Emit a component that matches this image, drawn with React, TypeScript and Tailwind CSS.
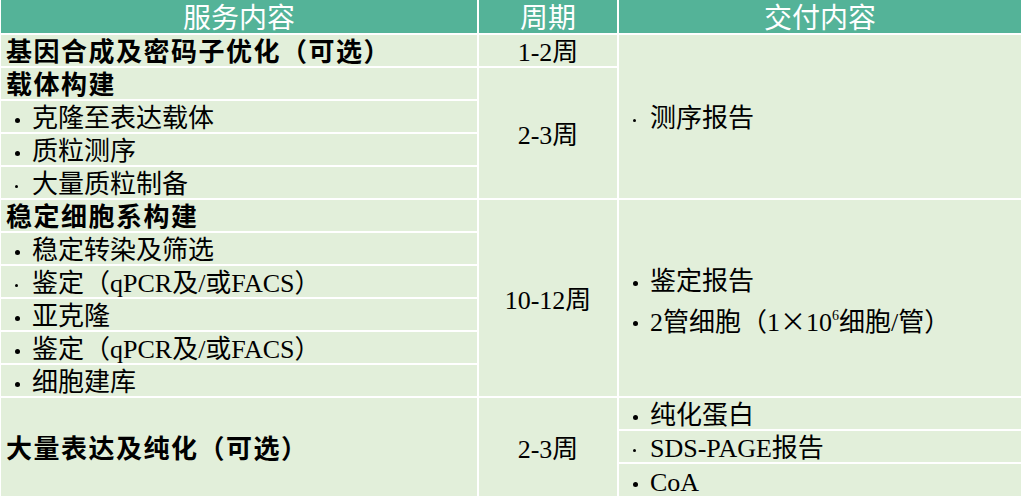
type Dot = "big" | "small";

function Bullet({ dot, children }: { dot: Dot; children: React.ReactNode }) {
  return (
    <div className="flex items-center pl-[14px]">
      <span className="flex w-[17px] items-center pt-[3px]">
        <span
          className={
            dot === "big"
              ? "block h-[5px] w-[5px] rounded-full bg-black"
              : "block h-[3px] w-[3px] rounded-full bg-black"
          }
        />
      </span>
      <span>{children}</span>
    </div>
  );
}

const cell = "bg-[#e2efda] flex items-center pt-[5px]";
const heading = "pl-[5px] font-bold tracking-[1.5px]";

export default function App() {
  return (
    <div className="h-[496px] w-[1021px] overflow-hidden bg-white pl-px font-['Liberation_Serif','Noto_Sans_CJK_SC',serif] text-[26px] leading-none text-black">
      <div className="grid grid-cols-[476px_138px_402px] grid-rows-[33px_repeat(13,31px)_32px] gap-[2px]">
        {/* header */}
        <div className="col-start-1 row-start-1 flex items-center justify-center bg-[#54b398] pt-[4px] text-[28px] text-white">
          服务内容
        </div>
        <div className="col-start-2 row-start-1 flex items-center justify-center bg-[#54b398] pt-[4px] text-[28px] text-white">
          周期
        </div>
        <div className="col-start-3 row-start-1 flex items-center justify-center bg-[#54b398] pt-[4px] text-[28px] text-white">
          交付内容
        </div>

        {/* service column */}
        <div className={`${cell} ${heading} col-start-1 row-start-2`}>基因合成及密码子优化（可选）</div>
        <div className={`${cell} ${heading} col-start-1 row-start-3`}>载体构建</div>
        <div className={`${cell} col-start-1 row-start-4`}>
          <Bullet dot="big">克隆至表达载体</Bullet>
        </div>
        <div className={`${cell} col-start-1 row-start-5`}>
          <Bullet dot="big">质粒测序</Bullet>
        </div>
        <div className={`${cell} col-start-1 row-start-6`}>
          <Bullet dot="small">大量质粒制备</Bullet>
        </div>
        <div className={`${cell} ${heading} col-start-1 row-start-7`}>稳定细胞系构建</div>
        <div className={`${cell} col-start-1 row-start-8`}>
          <Bullet dot="big">稳定转染及筛选</Bullet>
        </div>
        <div className={`${cell} col-start-1 row-start-9`}>
          <Bullet dot="small">鉴定（qPCR及/或FACS）</Bullet>
        </div>
        <div className={`${cell} col-start-1 row-start-10`}>
          <Bullet dot="big">亚克隆</Bullet>
        </div>
        <div className={`${cell} col-start-1 row-start-11`}>
          <Bullet dot="big">鉴定（qPCR及/或FACS）</Bullet>
        </div>
        <div className={`${cell} col-start-1 row-start-12`}>
          <Bullet dot="big">细胞建库</Bullet>
        </div>
        <div className={`${cell} ${heading} col-start-1 row-start-13 row-span-3`}>大量表达及纯化（可选）</div>

        {/* period column */}
        <div className={`${cell} col-start-2 row-start-2 justify-center`}>1-2周</div>
        <div className={`${cell} col-start-2 row-start-3 row-span-4 justify-center`}>2-3周</div>
        <div className={`${cell} col-start-2 row-start-7 row-span-6 justify-center`}>10-12周</div>
        <div className={`${cell} col-start-2 row-start-13 row-span-3 justify-center`}>2-3周</div>

        {/* deliverables column */}
        <div className={`${cell} col-start-3 row-start-2 row-span-5`}>
          <Bullet dot="small">测序报告</Bullet>
        </div>
        <div className="col-start-3 row-start-7 row-span-6 flex flex-col justify-center gap-[12px] bg-[#e2efda] pt-[9px]">
          <Bullet dot="big">鉴定报告</Bullet>
          <Bullet dot="big">
            2管细胞（1<span className="font-['Noto_Sans_CJK_SC']">×</span>10
            <sup className="relative top-[-11px] text-[14px]">6</sup>细胞/管）
          </Bullet>
        </div>
        <div className={`${cell} col-start-3 row-start-13`}>
          <Bullet dot="big">纯化蛋白</Bullet>
        </div>
        <div className={`${cell} col-start-3 row-start-14`}>
          <Bullet dot="small">SDS-PAGE报告</Bullet>
        </div>
        <div className={`${cell} col-start-3 row-start-15`}>
          <Bullet dot="big">CoA</Bullet>
        </div>
      </div>
    </div>
  );
}
